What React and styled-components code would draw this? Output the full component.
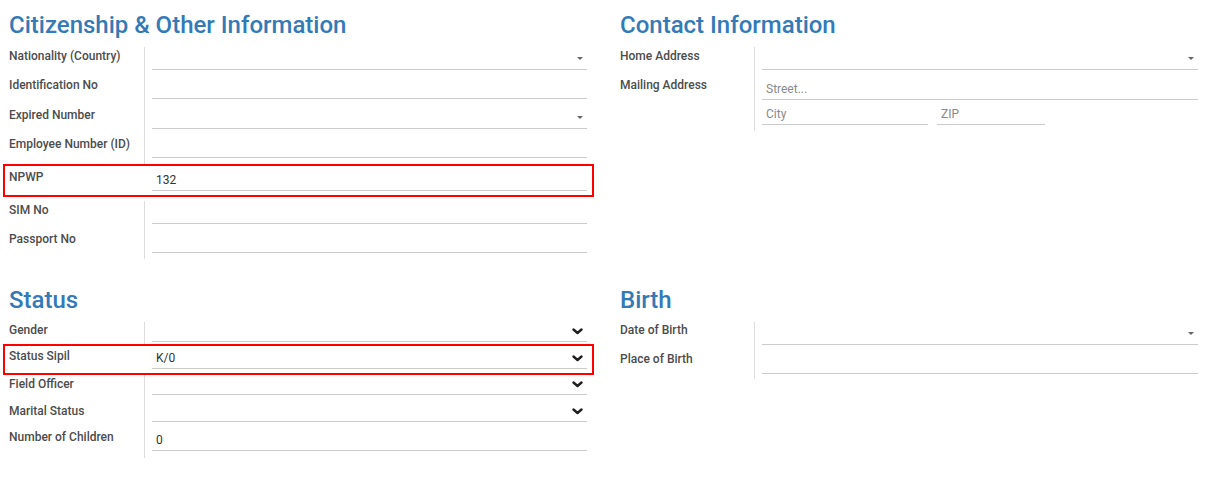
import React from "react";
import styled, { createGlobalStyle, css } from "styled-components";

const GlobalStyle = createGlobalStyle`
  body {
    margin: 0;
    background: #fff;
    font-family: Roboto, "Liberation Sans", sans-serif;
  }
`;

const Sheet = styled.div`
  display: grid;
  grid-template-columns: 578px 578px;
  column-gap: 33px;
  row-gap: 26px;
  align-items: start;
  padding: 10px 0 0 9px;
`;

const Group = styled.section`
  --lw: ${(p) => p.$lw || 135}px;
  display: flex;
  flex-direction: column;
`;

const Title = styled.h2`
  margin: 0 0 7px;
  font-size: 24px;
  line-height: 30px;
  font-weight: 500;
  color: #337ab7;
`;

const Label = styled.div`
  padding-top: ${(p) => (p.$pad ?? 1) + 1}px;
  font-size: 12px;
  line-height: 14px;
  font-weight: 500;
  color: #4c4c4c;
  white-space: nowrap;
`;

const Cell = styled.div`
  border-left: 1px solid #ddd;
  padding-left: 7px;
  min-width: 0;
`;

const Row = styled.div`
  display: grid;
  grid-template-columns: var(--lw) 1fr;
  box-sizing: border-box;
  height: ${(p) => p.$h}px;
  padding-top: ${(p) => p.$top || 0}px;

  ${(p) =>
    p.$marked &&
    css`
      border: 2px solid #f00;
      margin: 0 -7px 0 -6px;
      padding: 2px 5px 4px 4px;

      & > ${Cell} {
        border-left-color: transparent;
      }
    `}
`;

const Input = styled.div`
  box-sizing: border-box;
  display: flex;
  align-items: flex-end;
  height: ${(p) => p.$h + 1}px;
  width: ${(p) => (p.$w ? `${p.$w}px` : "auto")};
  padding: 0 4px 3px;
  border-bottom: 1px solid #ccc;
  font-size: 12px;
  line-height: 14px;
  color: #333;
`;

const Placeholder = styled.span`
  color: #8a8a8a;
`;

const Caret = styled.span`
  margin: 0 0 6px auto;
  width: 0;
  height: 0;
  border-left: 3px solid transparent;
  border-right: 3px solid transparent;
  border-top: 3px solid #666;
`;

const ChevronBox = styled.svg`
  margin: 0 0 3px auto;
  flex-shrink: 0;
`;

const CityLine = styled.div`
  display: flex;
  gap: 9px;
  margin-top: 2px;
`;

const Chevron = () => (
  <ChevronBox width="11" height="7" viewBox="0 0 11 7">
    <polyline
      points="1.5,1.5 5.5,5 9.5,1.5"
      fill="none"
      stroke="#1f1f1f"
      strokeWidth="2.4"
      strokeLinecap="round"
      strokeLinejoin="round"
    />
  </ChevronBox>
);

const Field = ({ label, h = 29.25, pad, ih = 22, top, marked, value, kind }) => (
  <Row $h={h} $top={top} $marked={marked}>
    <Label $pad={pad}>{label}</Label>
    <Cell>
      <Input $h={ih}>
        {value}
        {kind === "caret" && <Caret />}
        {kind === "select" && <Chevron />}
      </Input>
    </Cell>
  </Row>
);

export default function App() {
  return (
    <>
      <GlobalStyle />
      <Sheet>
        <Group>
          <Title>Citizenship &amp; Other Information</Title>
          <Field label="Nationality (Country)" kind="caret" />
          <Field label="Identification No" />
          <Field label="Expired Number" kind="caret" />
          <Field label="Employee Number (ID)" />
          <Field label="NPWP" h={33} marked value="132" />
          <Field label="SIM No" h={33} top={4} />
          <Field label="Passport No" h={29} />
        </Group>

        <Group $lw={134}>
          <Title>Contact Information</Title>
          <Field label="Home Address" h={29} kind="caret" />
          <Row $h={55}>
            <Label>Mailing Address</Label>
            <Cell>
              <Input $h={23}>
                <Placeholder>Street...</Placeholder>
              </Input>
              <CityLine>
                <Input $h={22} $w={166}>
                  <Placeholder>City</Placeholder>
                </Input>
                <Input $h={22} $w={108}>
                  <Placeholder>ZIP</Placeholder>
                </Input>
              </CityLine>
            </Cell>
          </Row>
        </Group>

        <Group>
          <Title>Status</Title>
          <Field label="Gender" h={22} pad={0} ih={19} kind="select" />
          <Field label="Status Sipil" h={31} pad={0} ih={20} marked value="K/0" kind="select" />
          <Field label="Field Officer" h={27} ih={19} kind="select" />
          <Field label="Marital Status" h={26} ih={19} kind="select" />
          <Field label="Number of Children" h={30} value="0" />
        </Group>

        <Group $lw={134}>
          <Title>Birth</Title>
          <Field label="Date of Birth" h={29} pad={0} kind="caret" />
          <Field label="Place of Birth" h={28} pad={0} />
        </Group>
      </Sheet>
    </>
  );
}
